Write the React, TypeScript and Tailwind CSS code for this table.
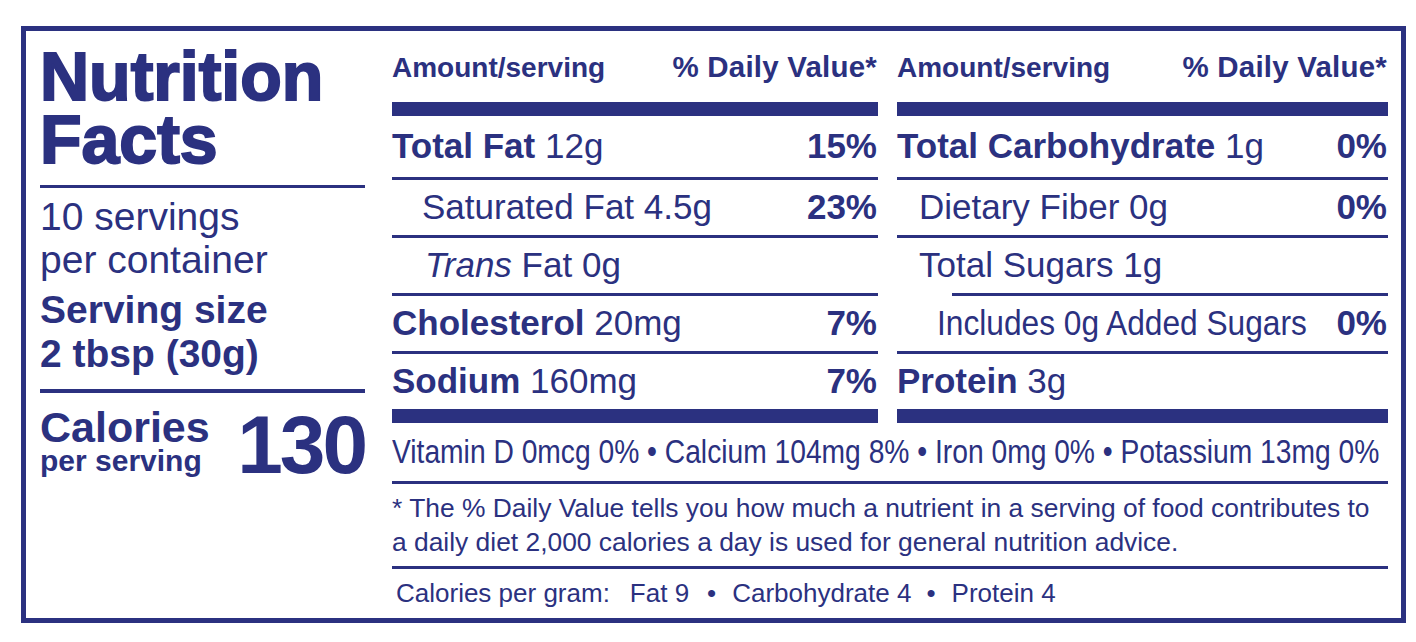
const ink = '#2b3180';

type Row = {
  name: string;
  bold?: boolean;
  italic?: string;
  amount: string;
  dv?: string;
  indent?: string;
  narrow?: boolean;
  lineIndent?: string;
};

const leftRows: Row[] = [
  { name: 'Total Fat', bold: true, amount: '12g', dv: '15%' },
  { name: 'Saturated Fat', amount: '4.5g', dv: '23%', indent: 'pl-[30px]' },
  { name: 'Fat', italic: 'Trans', amount: '0g', indent: 'pl-[33px]' },
  { name: 'Cholesterol', bold: true, amount: '20mg', dv: '7%' },
  { name: 'Sodium', bold: true, amount: '160mg', dv: '7%' },
];

const rightRows: Row[] = [
  { name: 'Total Carbohydrate', bold: true, amount: '1g', dv: '0%' },
  { name: 'Dietary Fiber', amount: '0g', dv: '0%', indent: 'pl-[22px]' },
  { name: 'Total Sugars', amount: '1g', indent: 'pl-[22px]' },
  { name: 'Includes 0g Added Sugars', amount: '', dv: '0%', indent: 'pl-[40px]', narrow: true, lineIndent: 'ml-[55px]' },
  { name: 'Protein', bold: true, amount: '3g' },
];

function NutrientRow({ row, first }: { row: Row; first: boolean }) {
  return (
    <>
      {!first && <div className={`h-[3px] bg-[#2b3180] ${row.lineIndent ?? ''}`} />}
      <div
        className={`flex items-center justify-between whitespace-nowrap text-[35px] ${first ? 'h-[61px]' : 'h-[55px]'} ${row.indent ?? ''}`}
      >
        <span className={row.narrow ? 'inline-block w-[369px] shrink-0 origin-left scale-x-[0.905]' : ''}>
          {row.italic && <i>{row.italic} </i>}
          {row.bold ? <b>{row.name}</b> : row.name}
          {row.amount && ' ' + row.amount}
        </span>
        {row.dv && <b className="pr-[1px]">{row.dv}</b>}
      </div>
    </>
  );
}

function Column({ rows, width }: { rows: Row[]; width: string }) {
  return (
    <div className={`flex flex-col ${width}`}>
      <div className="flex h-[71px] items-center justify-between pt-[2px] text-[28px] font-bold whitespace-nowrap">
        <span>Amount/serving</span>
        <span className="pr-[1px] text-[29.5px] tracking-[0.2px]">% Daily Value*</span>
      </div>
      <div className="h-[14px] bg-[#2b3180]" />
      {rows.map((r, i) => (
        <NutrientRow key={r.name} row={r} first={i === 0} />
      ))}
      <div className="h-[14px] bg-[#2b3180]" />
    </div>
  );
}

export default function App() {
  return (
    <div
      className="h-[642px] w-[1416px] overflow-hidden bg-white pt-[26px] pl-[21px] font-['Liberation_Sans',Arial,sans-serif] text-[#2b3180]"
      style={{ color: ink }}
    >
      <div className="flex h-[597px] w-[1385px] border-[5px] border-[#2b3180]">
        {/* left panel */}
        <div className="ml-[14px] flex w-[325px] flex-col">
          <h1 className="mt-[14px] text-[68px] leading-[63px] font-bold [-webkit-text-stroke:2px_#2b3180]">
            Nutrition
            <br />
            Facts
          </h1>
          <div className="mt-[14px] h-[3px] bg-[#2b3180]" />
          <p className="mt-[7px] text-[39px] leading-[43px]">
            10 servings
            <br />
            per container
          </p>
          <p className="mt-[7px] text-[39px] leading-[44px] font-bold">
            Serving size
            <br />
            2 tbsp (30g)
          </p>
          <div className="mt-[13px] h-[4px] bg-[#2b3180]" />
          <div className="mt-[16px] flex items-start justify-between">
            <div className="font-bold">
              <div className="text-[43px] leading-[37px]">Calories</div>
              <div className="text-[30px] leading-[30px]">per serving</div>
            </div>
            <div className="text-[82px] leading-[72px] font-bold tracking-[-3px]">130</div>
          </div>
        </div>

        {/* right panel */}
        <div className="ml-[27px] flex w-[996px] flex-col">
          <div className="flex gap-[19px]">
            <Column rows={leftRows} width="w-[486px]" />
            <Column rows={rightRows} width="w-[491px]" />
          </div>
          <div className="flex h-[58px] items-center whitespace-nowrap text-[33px]">
            <span className="inline-block w-[988px] shrink-0 origin-left scale-x-[0.855]">
              Vitamin D 0mcg 0% • Calcium 104mg 8% • Iron 0mg 0% • Potassium 13mg 0%
            </span>
          </div>
          <div className="h-[3px] bg-[#2b3180]" />
          <div className="flex h-[82px] items-center text-[26.4px] leading-[34px] whitespace-nowrap">
            <p>
              * The % Daily Value tells you how much a nutrient in a serving of food contributes to
              <br />
              a daily diet 2,000 calories a day is used for general nutrition advice.
            </p>
          </div>
          <div className="h-[3px] bg-[#2b3180]" />
          <div className="flex h-[49px] items-center pl-[4px] text-[26px] whitespace-nowrap">
            <span>Calories per gram:</span>
            <span className="ml-[20px]">Fat 9</span>
            <span className="ml-[18px]">•</span>
            <span className="ml-[16px]">Carbohydrate 4</span>
            <span className="ml-[15px]">•</span>
            <span className="ml-[16px]">Protein 4</span>
          </div>
        </div>
      </div>
    </div>
  );
}
